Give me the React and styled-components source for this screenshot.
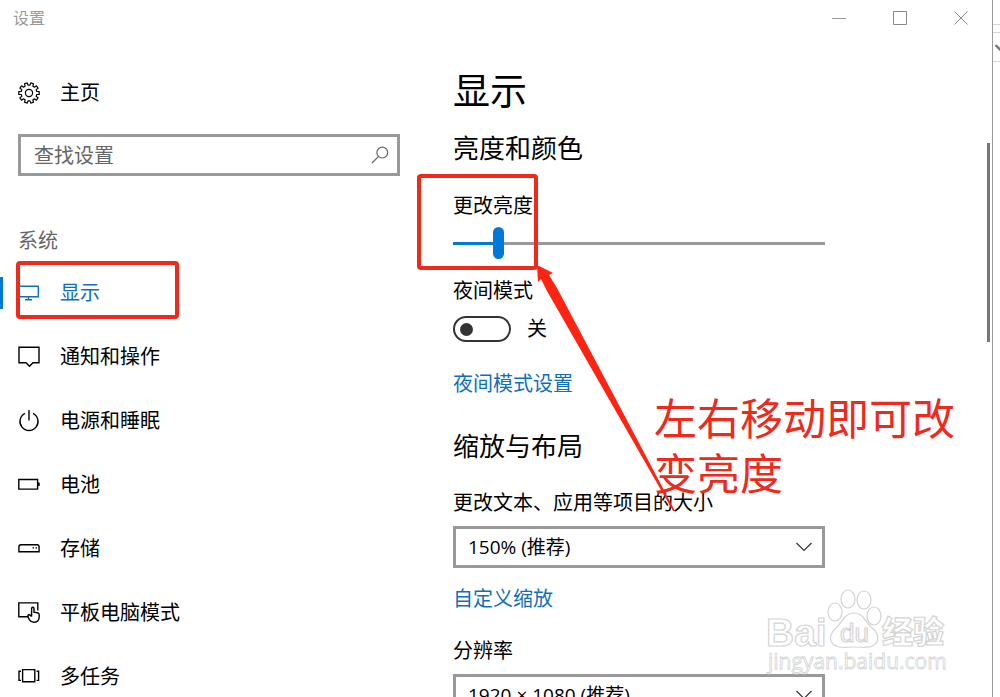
import React, { useState } from 'react'
import styled, { createGlobalStyle } from 'styled-components'

const accent = '#0078d7'
const linkBlue = '#0f6fb8'
const red = '#ee2a1c'

const GlobalStyle = createGlobalStyle`
  * {
    box-sizing: border-box;
  }

  body {
    margin: 0;
    overflow: hidden;
    background: #fff;
    color: #000;
    font-family: "Open Sans", "Noto Sans CJK SC", sans-serif;
    font-size: 20px;
    line-height: 28px;
  }

  h1, h2, p {
    margin: 0;
    font-weight: 400;
  }

  input, select, button {
    margin: 0;
    font: inherit;
    color: inherit;
  }
`

const Desktop = styled.div`
  display: flex;
  height: 100vh;
  overflow: hidden;
`

const Window = styled.div`
  position: relative;
  display: flex;
  flex: 1;
  flex-direction: column;
  min-width: 0;
  border-right: 1px solid #9a9a9a;
`

const TitleBar = styled.header`
  display: flex;
  flex: none;
  align-items: center;
  height: 36px;
  padding: 0 1px 0 13px;
  color: #999;
  font-size: 16px;
`

const TitleText = styled.span`
  flex: 1;
`

const WindowButton = styled.button`
  display: flex;
  align-items: center;
  justify-content: center;
  width: 61px;
  height: 36px;
  padding: 0;
  border: none;
  background: none;
`

const Body = styled.div`
  display: flex;
  flex: 1;
  min-height: 0;
`

const Sidebar = styled.aside`
  flex: none;
  width: 453px;
  padding-top: 38px;
`

const HomeLink = styled.a`
  display: flex;
  align-items: center;
  gap: 20px;
  height: 37px;
  padding-left: 18px;
  color: inherit;
  text-decoration: none;
`

const SearchBox = styled.label`
  display: flex;
  align-items: center;
  height: 42px;
  margin: 23px 53px 0 18px;
  padding: 0 8px 0 13px;
  border: 3px solid #999;

  input {
    flex: 1;
    min-width: 0;
    padding: 1px 0 0;
    border: none;
    outline: none;
    background: none;
  }

  input::placeholder {
    color: #666;
    opacity: 1;
  }
`

const GroupTitle = styled.h2`
  margin: 51px 0 6px 18px;
  color: #666;
  font-size: 20px;
`

const NavLink = styled.a`
  position: relative;
  display: flex;
  align-items: center;
  gap: 20px;
  height: 64px;
  padding-left: 18px;
  color: ${props => (props.$active ? linkBlue : '#000')};
  text-decoration: none;

  &::before {
    content: '';
    position: absolute;
    top: 16px;
    left: 0;
    width: 3px;
    height: 32px;
    background: ${props => (props.$active ? accent : 'transparent')};
  }
`

// red frame drawn over the interface
const Mark = styled.span`
  position: absolute;
  top: ${props => props.$top}px;
  left: ${props => props.$left}px;
  width: ${props => props.$width}px;
  height: ${props => props.$height}px;
  border: 4px solid ${red};
  border-radius: 4px;
  pointer-events: none;
`

const Main = styled.main`
  flex: 1;
  min-width: 0;
  padding: 31px 162px 0 0;
`

const PageTitle = styled.h1`
  font-size: 37px;
  line-height: 48px;
`

const SectionTitle = styled.h2`
  margin-top: ${props => props.$gap}px;
  font-size: 26px;
  line-height: 36px;
`

const Field = styled.div`
  position: relative;
  display: flex;
  flex-direction: column;
  margin-top: ${props => props.$gap}px;
`

const Range = styled.input`
  width: 100%;
  height: 32px;
  margin-top: 7px;
  appearance: none;
  background: linear-gradient(
      to right,
      ${accent} var(--fill),
      #999 var(--fill)
    )
    center / 100% 3px no-repeat;

  &::-webkit-slider-thumb {
    width: 11px;
    height: 32px;
    border-radius: 6px;
    appearance: none;
    background: ${accent};
  }
`

const SwitchRow = styled.label`
  display: flex;
  align-items: center;
  gap: 16px;
  margin-top: 10px;
`

const Switch = styled.input`
  display: flex;
  align-items: center;
  width: 58px;
  height: 26px;
  padding: 0 5px;
  border: 2px solid #333;
  border-radius: 13px;
  appearance: none;

  &::before {
    content: '';
    width: 13px;
    height: 13px;
    border-radius: 50%;
    background: #333;
  }

  &:checked {
    justify-content: flex-end;
    border-color: ${accent};
    background: ${accent};
  }

  &:checked::before {
    background: #fff;
  }
`

const TextLink = styled.a`
  display: block;
  width: max-content;
  margin-top: ${props => props.$gap}px;
  color: ${linkBlue};
  text-decoration: none;
`

const SelectBox = styled.div`
  position: relative;
  margin-top: 9px;

  select {
    display: block;
    width: 100%;
    height: 42px;
    padding: 0 40px 0 12px;
    border: 3px solid #999;
    border-radius: 0;
    appearance: none;
    background: #fff;
    font-size: 19px;
  }

  svg {
    position: absolute;
    top: 16px;
    right: 12px;
    pointer-events: none;
  }
`

const ScrollThumb = styled.div`
  flex: none;
  width: 3px;
  height: 199px;
  margin: 107px 2px 0 0;
  background: #777;
`

const Arrow = styled.svg`
  position: absolute;
  top: 264px;
  left: 536px;
  pointer-events: none;
`

const Note = styled.p`
  position: absolute;
  top: 391px;
  left: 654px;
  width: 304px;
  color: ${red};
  font-size: 43px;
  line-height: 55px;
  pointer-events: none;
`

const Watermark = styled.svg`
  position: absolute;
  right: 44px;
  bottom: 18px;
  pointer-events: none;
`

const BackWindow = styled.div`
  flex: none;
  width: 7px;
  overflow: hidden;
`

const BackLine = styled.div`
  height: ${props => props.$height}px;
  border-bottom: 1px solid #d4d4d4;
`

const Icon = ({ children }) => (
  <svg
    width="22"
    height="22"
    viewBox="0 0 22 22"
    fill="none"
    stroke="currentColor"
    strokeWidth="1.4"
    aria-hidden="true"
  >
    {children}
  </svg>
)

// closed outline of a cog with the given number of teeth
function gearPath(teeth) {
  const step = (Math.PI * 2) / teeth
  const points = []
  for (let i = 0; i < teeth; i++) {
    const mid = i * step + step / 2
    const corners = [
      [-0.3, 7.9],
      [-0.22, 10.3],
      [0.22, 10.3],
      [0.3, 7.9]
    ]
    corners.forEach(([offset, r]) => {
      const a = mid + offset * step
      points.push(`${(11 + r * Math.sin(a)).toFixed(2)} ${(11 - r * Math.cos(a)).toFixed(2)}`)
    })
  }
  return `M${points.join('L')}Z`
}

const GearIcon = () => (
  <Icon>
    <path d={gearPath(10)} strokeWidth="1.2" strokeLinejoin="round" />
    <circle cx="11" cy="11" r="3.6" strokeWidth="1.2" />
  </Icon>
)

const navItems = [
  {
    name: '显示',
    icon: <path d="M.7 4.2H20.3V14.8H.7ZM10.5 14.8V17.5M7 17.8H14" />
  },
  {
    name: '通知和操作',
    icon: <path d="M1 1.2H21V16.8H15L11.5 20.3L8 16.8H1Z" />
  },
  {
    name: '电源和睡眠',
    icon: <path d="M11 0V10.5M7 3.4A9 9 0 1 0 15 3.4" />
  },
  {
    name: '电池',
    icon: <path d="M.8 5.5H19.6V15.1H.8ZM21 8.5V12.1" />
  },
  {
    name: '存储',
    icon: (
      <>
        <path d="M.9 13.7V8.9Q.9 6.7 3 6.7H19Q21.1 6.7 21.1 8.9V13.7Z" />
        <path d="M14.5 9.9H16M17.5 9.9H19" />
      </>
    )
  },
  {
    name: '平板电脑模式',
    icon: (
      <>
        <path d="M10 14.7H.8V.9H19.8V8.6" />
        <path d="M13.6 14.6V6.6Q13.6 5.2 14.8 5.2Q16 5.2 16 6.6V10.2L19.6 10.8Q21.2 11.2 21.2 12.8V14.8Q21.2 20.2 16 20.2Q13 20.2 11.4 17.8L10 14.8Q9.6 13 10.8 12.8Q12.2 12.6 13.6 14.6" />
      </>
    )
  },
  {
    name: '多任务',
    icon: <path d="M4.6 3.6H16.8V15.8H4.6ZM3 5.2H1V14.4H3M18.6 5.2H20.6V14.4H18.6" />
  }
]

const Chevron = () => (
  <svg width="18" height="10" fill="none" stroke="#333" strokeWidth="1.2" aria-hidden="true">
    <path d="M1.5 1L9 8.5L16.5 1" />
  </svg>
)

const Dropdown = ({ id, label, gap, value }) => (
  <Field $gap={gap}>
    <label htmlFor={id}>{label}</label>
    <SelectBox>
      <select id={id} defaultValue={value}>
        <option>{value}</option>
      </select>
      <Chevron />
    </SelectBox>
  </Field>
)

const WindowControls = () => (
  <>
    <WindowButton aria-label="最小化">
      <svg width="14" height="14" stroke="#999">
        <path d="M0 7.5H14" />
      </svg>
    </WindowButton>
    <WindowButton aria-label="最大化">
      <svg width="14" height="14" fill="none" stroke="#888">
        <path d="M.5 .5H13.5V13.5H.5Z" />
      </svg>
    </WindowButton>
    <WindowButton aria-label="关闭">
      <svg width="14" height="14" stroke="#888">
        <path d="M.5 .5L13.5 13.5M13.5 .5L.5 13.5" />
      </svg>
    </WindowButton>
  </>
)

const BaiduMark = () => (
  <Watermark width="184" height="96" viewBox="0 0 184 96" fill="#fff" stroke="#d4d4d4" strokeWidth="1.2">
    <text x="2" y="63" fontSize="39" fontWeight="700" fontFamily="Liberation Sans, sans-serif">Bai</text>
    <ellipse cx="71" cy="29" rx="7" ry="9" />
    <ellipse cx="84" cy="16" rx="7" ry="9" />
    <ellipse cx="100" cy="17" rx="7" ry="9" />
    <ellipse cx="110" cy="33" rx="7" ry="9" />
    <path d="M90 30C99 30 101 38 107 44C115 50 116 58 110 62C105 66 98 64 90 64C82 64 76 66 70 62C64 57 66 50 73 44C79 38 81 30 90 30Z" />
    <text x="76" y="59" fontSize="26" fontFamily="Liberation Sans, sans-serif">du</text>
    <text x="118" y="60" fontSize="31" fontWeight="900" fontFamily="Noto Sans CJK SC, sans-serif">经验</text>
    <text x="4" y="86" fontSize="21" strokeWidth="0.8" fontFamily="Open Sans, sans-serif">jingyan.baidu.com</text>
  </Watermark>
)

export default function App() {
  const [brightness, setBrightness] = useState(11)
  const [night, setNight] = useState(false)

  return (
    <Desktop>
      <GlobalStyle />
      <Window>
        <TitleBar>
          <TitleText>设置</TitleText>
          <WindowControls />
        </TitleBar>
        <Body>
          <Sidebar>
            <HomeLink href="#home">
              <GearIcon />
              主页
            </HomeLink>
            <SearchBox>
              <input type="text" placeholder="查找设置" aria-label="查找设置" />
              <svg width="18" height="18" fill="none" stroke="#666" strokeWidth="1.2">
                <circle cx="11.3" cy="6.6" r="5.4" />
                <path d="M7.4 10.6L1 17" />
              </svg>
            </SearchBox>
            <GroupTitle>系统</GroupTitle>
            <nav>
              {navItems.map((item, i) => (
                <NavLink key={item.name} href={`#${item.name}`} $active={i === 0}>
                  <Icon>{item.icon}</Icon>
                  {item.name}
                  {i === 0 && <Mark $top={0} $left={16} $width={163} $height={58} />}
                </NavLink>
              ))}
            </nav>
          </Sidebar>
          <Main>
            <PageTitle>显示</PageTitle>
            <SectionTitle $gap={15}>亮度和颜色</SectionTitle>
            <Field $gap={26}>
              <label htmlFor="brightness">更改亮度</label>
              <Range
                id="brightness"
                type="range"
                value={brightness}
                onChange={e => setBrightness(Number(e.target.value))}
                style={{ '--fill': `${brightness}%` }}
              />
              <Mark $top={-18} $left={-36} $width={121} $height={96} />
            </Field>
            <Field $gap={18}>
              <label htmlFor="night">夜间模式</label>
              <SwitchRow>
                <Switch
                  id="night"
                  type="checkbox"
                  role="switch"
                  checked={night}
                  onChange={e => setNight(e.target.checked)}
                />
                {night ? '开' : '关'}
              </SwitchRow>
            </Field>
            <TextLink href="#night" $gap={27}>夜间模式设置</TextLink>
            <SectionTitle $gap={30}>缩放与布局</SectionTitle>
            <Dropdown id="scale" gap={25} label="更改文本、应用等项目的大小" value="150% (推荐)" />
            <TextLink href="#scale" $gap={17}>自定义缩放</TextLink>
            <Dropdown id="resolution" gap={24} label="分辨率" value="1920 × 1080 (推荐)" />
          </Main>
          <ScrollThumb />
        </Body>
        <Arrow width="140" height="250" fill="#fd2414">
          <path d="M1 1L17 9L13 11L21 24L139 247L137 247L11 27L5 15L2 18Z" />
        </Arrow>
        <Note>左右移动即可改变亮度</Note>
        <BaiduMark />
      </Window>
      <BackWindow>
        <BackLine $height={25} />
        <BackLine $height={8} />
        <BackLine $height={29}>
          <svg width="14" height="28" fill="none" stroke="#777" strokeWidth="2.4">
            <path d="M2.5 12L8 17.5L13.5 12" />
          </svg>
        </BackLine>
      </BackWindow>
    </Desktop>
  )
}
